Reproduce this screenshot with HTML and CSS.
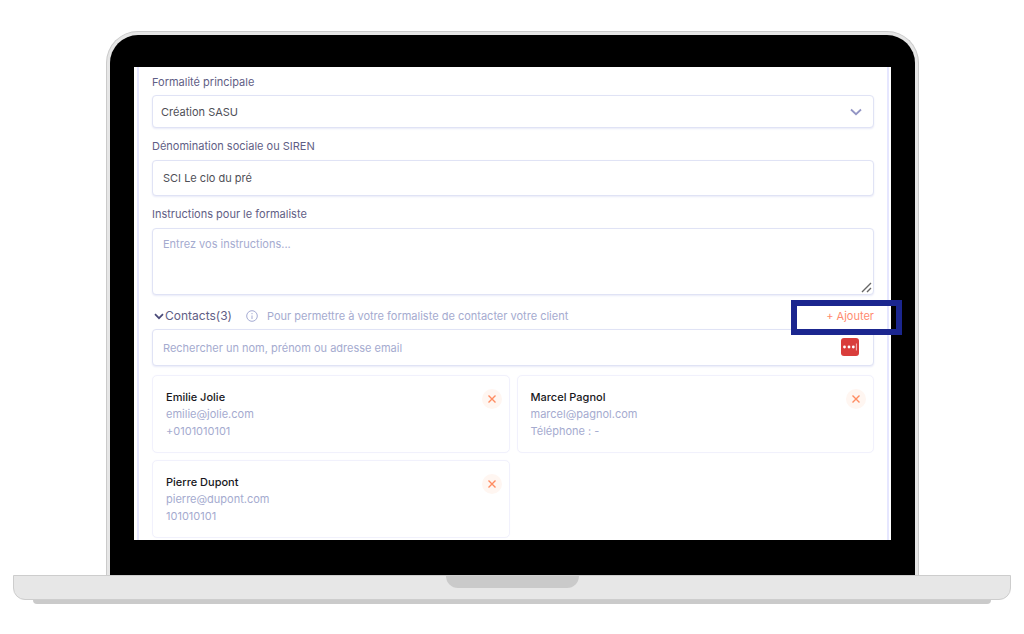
FILE: index.html
```html
<!DOCTYPE html>
<html lang="fr">
<head>
<meta charset="utf-8">
<title>Formalité</title>
<link rel="stylesheet" href="styles.css">
</head>
<body>
<main class="laptop">
  <div class="lid">
    <div class="bezel">
      <div class="screen">
        <form class="panel">
          <label class="label" for="formality">Formalité principale</label>
          <div class="field">
            <select class="control select" id="formality"><option>Création SASU</option></select>
            <svg class="chevron" viewBox="0 0 12 8" aria-hidden="true"><path d="M1 1.5 6 6.2 11 1.5"/></svg>
          </div>

          <label class="label" for="company">Dénomination sociale ou SIREN</label>
          <div class="field"><input class="control input" id="company" type="text" value="SCI Le clo du pré"></div>

          <label class="label" for="instructions">Instructions pour le formaliste</label>
          <div class="field">
            <textarea class="control textarea" id="instructions" placeholder="Entrez vos instructions..."></textarea>
            <svg class="grip" viewBox="0 0 11 11" aria-hidden="true"><path d="M1 10 10 1M6 10l4-4"/></svg>
          </div>

          <div class="contacts-head">
            <svg class="toggle" viewBox="0 0 10 7" aria-hidden="true"><path d="M1 1.2 5 5.2 9 1.2"/></svg>
            <label class="contacts-title" for="search">Contacts(3)</label>
            <svg class="info" viewBox="0 0 12 12" aria-hidden="true"><circle cx="6" cy="6" r="5.3"/><path d="M6 5.5V9M6 3v1.2"/></svg>
            <span class="hint">Pour permettre à votre formaliste de contacter votre client</span>
            <span class="add-wrap">
              <button class="add" type="button">+ Ajouter</button>
              <span class="highlight"></span>
            </span>
          </div>
          <div class="field search-field">
            <input class="control input search" id="search" type="text" placeholder="Rechercher un nom, prénom ou adresse email">
            <svg class="password" viewBox="0 0 18 18" aria-hidden="true"><rect width="18" height="18" rx="3"/><circle cx="3.5" cy="9" r="1.4"/><circle cx="8" cy="9" r="1.4"/><circle cx="12.3" cy="9" r="1.4"/><path d="M15.4 5.5v7"/></svg>
          </div>

          <div class="cards">
            <article class="card">
              <div><h2 class="name">Emilie Jolie</h2><p class="detail">emilie@jolie.com</p><p class="detail">+0101010101</p></div>
              <button class="remove" type="button" aria-label="Retirer Emilie Jolie"><svg viewBox="0 0 8 8"><path d="M.5.5l7 7M7.5.5l-7 7"/></svg></button>
            </article>
            <article class="card">
              <div><h2 class="name">Marcel Pagnol</h2><p class="detail">marcel@pagnol.com</p><p class="detail">Téléphone : -</p></div>
              <button class="remove" type="button" aria-label="Retirer Marcel Pagnol"><svg viewBox="0 0 8 8"><path d="M.5.5l7 7M7.5.5l-7 7"/></svg></button>
            </article>
            <article class="card">
              <div><h2 class="name">Pierre Dupont</h2><p class="detail">pierre@dupont.com</p><p class="detail">101010101</p></div>
              <button class="remove" type="button" aria-label="Retirer Pierre Dupont"><svg viewBox="0 0 8 8"><path d="M.5.5l7 7M7.5.5l-7 7"/></svg></button>
            </article>
          </div>
        </form>
      </div>
    </div>
  </div>
  <div class="base"><div class="notch"></div></div>
  <div class="foot"></div>
</main>
</body>
</html>
```
FILE: styles.css
```css
* { box-sizing: border-box; }
body { margin: 0; background: #fff; font-family: Inter, "Open Sans", sans-serif; font-size: 11px; line-height: 16px; color: #5f5e85; }
svg { fill: none; display: block; flex: none; }

.laptop { padding: 31px 13px 0; }
.lid { margin: 0 92px 0 93px; padding: 3px 3px 0; border: 1px solid #cbcbcb; border-bottom: 0; border-radius: 32px 32px 0 0; background: #e6e6e6; }
.bezel { padding: 32px 24px 35px; background: #000; border-radius: 28px 28px 0 0; }
.screen { padding: 0 2px 0 3px; background: #fff; }
.panel { padding: 7px 13px 2px; border: solid #e6e7ff; border-width: 0 2px; }
.base { height: 25px; border: 1px solid #cdcdcd; border-radius: 0 0 12px 12px; background: #e7e7e7; }
.notch { width: 133px; height: 12px; margin: 0 auto; border-radius: 0 0 12px 12px; background: #cacaca; }
.foot { height: 4px; margin: 0 20px; border-radius: 0 0 4px 4px; background: #cacaca; }

.label { display: block; margin-bottom: 5px; }
.field { position: relative; margin-bottom: 10px; }
.field + .label { margin-bottom: 6px; }
.control { display: block; width: 100%; margin: 0; padding: 0 10px; border: 1px solid #e0e3f5; border-radius: 4px; background: #fff; box-shadow: 0 1px 2px #e9ebf8; color: #4f4f57; font: inherit; appearance: none; outline: 0; }
.control::placeholder { color: #a5abcf; opacity: 1; }
.select { height: 33px; padding: 0 8px; }
.input { height: 36px; }
.search-field { margin-bottom: 9px; }
.search { height: 37px; }
.textarea { height: 67px; padding: 7px 10px; resize: none; }
.chevron { position: absolute; right: 12px; top: 13px; width: 12px; height: 8px; stroke: #9295c4; stroke-width: 1.8; }
.grip { position: absolute; right: 2px; bottom: 2px; width: 11px; height: 11px; stroke: #666; stroke-width: 1.4; }

.contacts-head { display: flex; align-items: center; margin: 13px 0 5px; }
.toggle { width: 10px; height: 7px; margin: 0 1px 0 2px; stroke: #4a4a78; stroke-width: 1.7; }
.contacts-title { font-size: 12px; }
.info { width: 12px; height: 12px; margin: 0 9px 0 14px; stroke: #a5abd3; }
.hint { color: #a5abcf; }
.add-wrap { position: relative; margin-left: auto; }
.add { display: block; padding: 0; border: 0; background: none; color: #ff8b70; font: inherit; cursor: pointer; }
.highlight { position: absolute; top: -8px; right: -28px; width: 111px; height: 35px; border: 6px solid #1b268f; pointer-events: none; z-index: 1; }
.password { position: absolute; right: 15px; top: 9px; width: 18px; height: 18px; }
.password rect { fill: #d93d3b; }
.password circle { fill: #fff; }
.password path { stroke: #f3b8b7; }

.cards { display: grid; grid-template-columns: 1fr 1fr; gap: 7px; }
.card { display: flex; justify-content: space-between; align-items: flex-start; padding: 13px 7px 12px 13px; border: 1px solid #f1f1fc; border-radius: 5px; box-shadow: 0 0 1px #f1f1fc; line-height: 17px; }
.name { margin: 0; font-size: 11px; font-weight: 500; color: #17171c; }
.detail { margin: 0; color: #a5abcf; }
.remove { display: grid; place-items: center; width: 20px; height: 20px; padding: 0; border: 0; border-radius: 50%; background: #fff6f1; cursor: pointer; }
.remove svg { width: 8px; height: 8px; stroke: #ff8c61; stroke-width: 1.4; }
```
